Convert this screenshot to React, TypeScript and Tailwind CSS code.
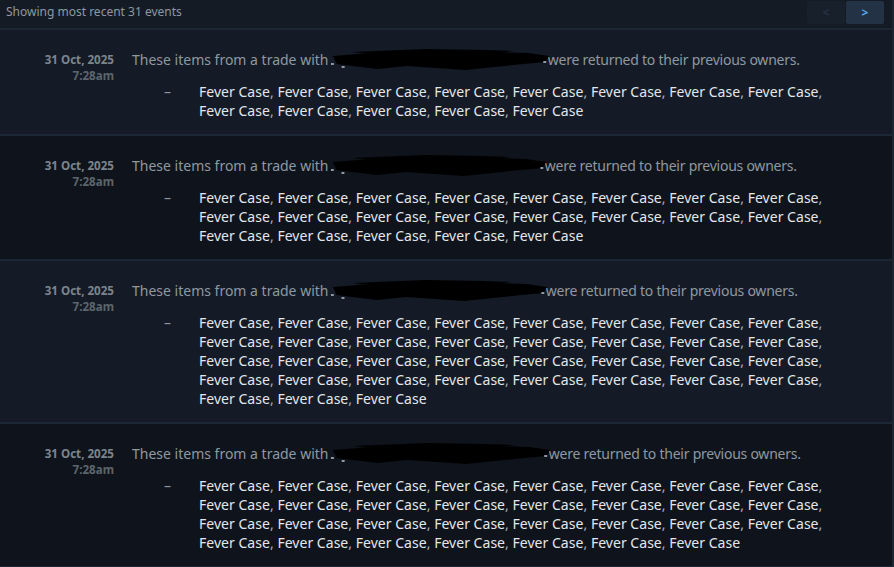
const FONT = { fontFamily: '"Noto Sans", "Open Sans", sans-serif' };

type Event = { date: string; time: string; count: number; blot: number };

const events: Event[] = [
  { date: '31 Oct, 2025', time: '7:28am', count: 13, blot: 212 },
  { date: '31 Oct, 2025', time: '7:28am', count: 21, blot: 209 },
  { date: '31 Oct, 2025', time: '7:28am', count: 35, blot: 210 },
  { date: '31 Oct, 2025', time: '7:28am', count: 31, blot: 213 },
];

function Blot({ width }: { width: number }) {
  return (
    <span className="relative inline-block h-[14px] align-middle" style={{ width }}>
      <svg
        className="absolute -left-[3px] -top-[5px] overflow-visible"
        width={width + 12}
        height="24"
        viewBox="0 0 230 24"
        preserveAspectRatio="none"
      >
        <path
          d="M4 7 L30 5 L70 2 L120 1 L170 3 L205 4 L226 7 L222 13 L200 15 L170 18 L140 21 L110 19 L80 17 L50 20 L24 17 L8 15 Z"
          fill="#000"
        />
        <path d="M24 3 L100 0 L160 1 L190 2 L150 7 L60 7 Z" fill="#000" />
        <rect x="2" y="14" width="3" height="2" fill="#8f98a0" />
        <rect x="13" y="17" width="3" height="2" fill="#8f98a0" />
        <rect x="220" y="12" width="3" height="2" fill="#8f98a0" />
      </svg>
    </span>
  );
}

function EventRow({ ev, odd }: { ev: Event; odd: boolean }) {
  const items = Array.from({ length: ev.count });
  return (
    <div
      className={`flex border-b-2 border-[#1c2735] pb-[14px] pt-[20px] ${odd ? 'bg-[#141b26]' : 'bg-[#0f141c]'}`}
    >
      <div className="w-[114px] shrink-0 pt-[2px] text-right text-[11.6px] font-bold leading-4">
        <div className="text-[#7c858d]">{ev.date}</div>
        <div className="text-[#5c656d]">{ev.time}</div>
      </div>
      <div className="ml-[18px] flex-1">
        <div className="text-[14px] leading-5 text-[#8f98a0]">
          These items from a trade with <Blot width={ev.blot} />{' '}
          <span className="tracking-[-0.24px]">were returned to their previous owners.</span>
        </div>
        <div className="mt-3 flex">
          <div className="w-[67px] shrink-0 pl-[32px] text-[14px] leading-[19px] text-[#8f98a0]">–</div>
          <div className="w-[650px] text-[14px] leading-[19px] tracking-[0.03px]">
            {items.map((_, i) => (
              <span key={i}>
                <span className="text-[#e3e7ea]">Fever Case</span>
                {i < items.length - 1 && <span className="text-[#a7aeb5]">, </span>}
              </span>
            ))}
          </div>
        </div>
      </div>
    </div>
  );
}

export default function App() {
  return (
    <div className="h-[567px] w-[894px] overflow-hidden bg-[#0f141c]" style={FONT}>
      <div className="border-r-2 border-[#1c2633]">
        <div className="flex h-[30px] items-start justify-between border-b-2 border-[#1c2735] bg-[#151b25]">
          <div className="pl-[6px] pt-[3px] text-[12px] leading-[18px] text-[#8f98a0]">
            Showing most recent 31 events
          </div>
          <div className="mr-[8px] mt-[1px] flex gap-[1px]">
            <button className="h-[23px] w-[38px] rounded-[2px] bg-[#18202b] text-[12px] text-[#2c3d50]">&lt;</button>
            <button className="h-[23px] w-[38px] rounded-[2px] bg-[#233245] text-[12px] font-bold text-[#5aaaf0]">&gt;</button>
          </div>
        </div>
        {events.map((ev, i) => (
          <EventRow key={i} ev={ev} odd={i % 2 === 0} />
        ))}
      </div>
    </div>
  );
}
